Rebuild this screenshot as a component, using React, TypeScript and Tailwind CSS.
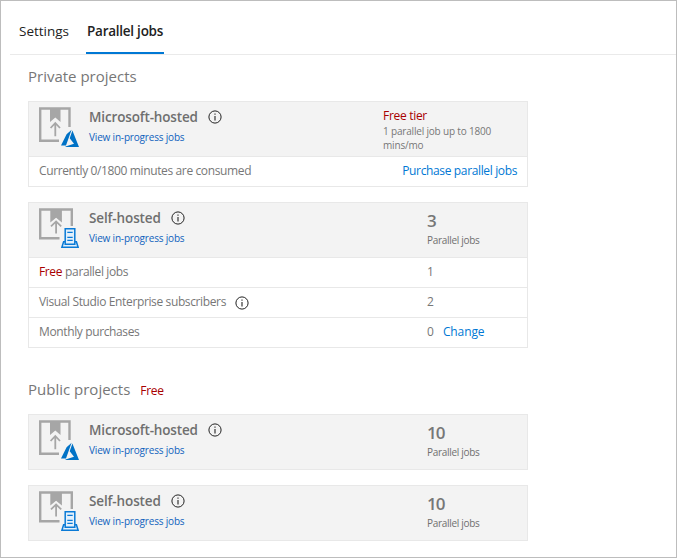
import type { ReactNode } from "react";

function InfoIcon() {
  return (
    <svg width="14" height="14" viewBox="0 0 14 14" fill="none" className="shrink-0">
      <circle cx="7" cy="7" r="6.1" stroke="#222222" strokeWidth="1" />
      <path d="M7 6v4.4" stroke="#222222" strokeWidth="1.1" />
      <path d="M7 3.4v1.3" stroke="#222222" strokeWidth="1.1" />
    </svg>
  );
}

function MicrosoftHostedIcon() {
  return (
    <svg width="40" height="41" viewBox="0 0 40 41" fill="none" className="shrink-0">
      <path d="M20 33.7H1.2V1.5H30.5V20" stroke="#a6a6a6" strokeWidth="2.4" />
      <path d="M11 1h10.5v14l-5.2-4.5L11 15z" fill="#a6a6a6" />
      <path d="M16.3 30V16M11.8 21l4.5-5 4.5 5" stroke="#f3f3f3" strokeWidth="4.5" />
      <path d="M16.3 29.3V16.3M11.6 21l4.7-5 4.7 5" stroke="#a6a6a6" strokeWidth="1.8" />
      <path d="M32.6 22.7L27.6 27.2 22 38.6h5zM33.4 23.6L30.7 31.2 35 36.8 26.5 39.4V40H40z" fill="#0072c6" />
    </svg>
  );
}

function SelfHostedIcon() {
  return (
    <svg width="40" height="41" viewBox="0 0 40 41" fill="none" className="shrink-0">
      <path d="M20.5 30.2H1.2V1.5H32.8V18" stroke="#a6a6a6" strokeWidth="2.4" />
      <path d="M11.3 1h11.6v13.5l-5.8-4.7-5.8 4.7z" fill="#a6a6a6" />
      <path d="M17.1 26V13M12 18.2l5.1-5 5.1 5" stroke="#f3f3f3" strokeWidth="4.2" />
      <path d="M17.1 25.5V13.6M12 18.4l5.1-5 5.1 5" stroke="#a6a6a6" strokeWidth="1.8" />
      <path d="M26 33.8h-1.4L22.9 39.2H39.1L37.4 33.8H36" fill="#e3f0fb" stroke="#0a7ad6" strokeWidth="1.5" />
      <path d="M26.2 36.3V20.7H35.8V36.3z" fill="#e3f0fb" stroke="#0a7ad6" strokeWidth="1.5" />
      <path d="M28.3 24.4h5.4M28.3 29.4h5.4M28.3 32.4h5.4" stroke="#0a7ad6" strokeWidth="1.2" />
    </svg>
  );
}

type HeaderProps = { kind: "microsoft" | "self"; children: ReactNode };

function CardHeader({ kind, children }: HeaderProps) {
  const microsoft = kind === "microsoft";
  return (
    <div className="flex h-[54px] bg-[#f3f3f3] pl-2.5">
      <div className="w-[50px] pt-[5px]">{microsoft ? <MicrosoftHostedIcon /> : <SelfHostedIcon />}</div>
      <div className="flex-1">
        <div className="flex items-center gap-[10px] pt-[5px]">
          <span className={`text-[13.5px] leading-5 font-semibold whitespace-nowrap text-[#6f6f6f] ${microsoft ? "w-[109px] tracking-[-0.15px]" : "w-[72px] tracking-[-0.12px]"}`}>
            {microsoft ? "Microsoft-hosted" : "Self-hosted"}
          </span>
          <InfoIcon />
        </div>
        <a className="block pt-[2px] text-[10px] leading-4 tracking-[-0.18px] text-[#1062bd]">View in-progress jobs</a>
      </div>
      {children}
    </div>
  );
}

function JobCount({ count }: { count: number }) {
  return (
    <div className="w-[100px] pt-[6px] text-[#6f6f6f]">
      <div className="text-[17px] leading-[23px] font-semibold tracking-[-1px] text-[#777777]">{count}</div>
      <div className="text-[10px] leading-4 tracking-[-0.3px]">Parallel jobs</div>
    </div>
  );
}

function Row({ label, children }: { label: ReactNode; children: ReactNode }) {
  return (
    <div className="flex h-[30px] border-t border-[#e8e8e8] pl-2.5 text-[12px] leading-[28px] text-[#777777]">
      <div className="flex flex-1 items-start tracking-[-0.37px]">{label}</div>
      {children}
    </div>
  );
}

function Card({ children, className = "" }: { children: ReactNode; className?: string }) {
  return <section className={`w-[500px] border border-[#e8e8e8] bg-white ${className}`}>{children}</section>;
}

export default function App() {
  return (
    <main className="h-[558px] w-[677px] overflow-hidden border border-[#bdbdbd] bg-white font-['Open_Sans','Noto_Sans',sans-serif]">
      <nav className="ml-[9px] flex h-[54px] items-end gap-[17px] border-b border-[#eaeaea] pl-[9px] text-[13.5px] text-[#222222]">
        <a className="w-[50px] pb-[13px] leading-5">Settings</a>
        <a className="h-[33px] w-[78px] border-b-2 border-[#0078d4] pl-px leading-[20px] font-semibold tracking-[-0.25px] whitespace-nowrap">Parallel jobs</a>
      </nav>
      <div className="pl-[27px]">
        <h2 className="h-[46px] pt-[9px] text-[15px] leading-6 text-[#777777]">Private projects</h2>
        <Card>
          <CardHeader kind="microsoft">
            <div className="w-[144px] pt-[5px]">
              <div className="text-[12px] leading-[18px] tracking-[-0.3px] text-[#a80000]">Free tier</div>
              <div className="-mt-px w-[120px] text-[10px] leading-[14px] tracking-[-0.18px] text-[#777777]">1 parallel job up to 1800 mins/mo</div>
            </div>
          </CardHeader>
          <Row label="Currently 0/1800 minutes are consumed">
            <a className="pr-[10px] tracking-[-0.36px] text-[#0078d4]">Purchase parallel jobs</a>
          </Row>
        </Card>
        <Card className="mt-[15px]">
          <CardHeader kind="self"><JobCount count={3} /></CardHeader>
          <Row label={<><span className="mr-[3px] text-[#a80000]">Free</span>parallel jobs</>}>
            <div className="w-[100px]">1</div>
          </Row>
          <Row label={<>Visual Studio Enterprise subscribers<span className="ml-[9px] pt-2"><InfoIcon /></span></>}>
            <div className="w-[100px]">2</div>
          </Row>
          <Row label="Monthly purchases">
            <div className="flex w-[100px] gap-[9px]">0<a className="tracking-[-0.1px] text-[#0078d4]">Change</a></div>
          </Row>
        </Card>
        <div className="flex h-[66px] gap-[10px] pt-[29px]">
          <h2 className="text-[15px] leading-6 text-[#777777]">Public projects</h2>
          <span className="text-[12px] leading-[27px] tracking-[-0.3px] text-[#a80000]">Free</span>
        </div>
        <Card><CardHeader kind="microsoft"><JobCount count={10} /></CardHeader></Card>
        <Card className="mt-[15px]"><CardHeader kind="self"><JobCount count={10} /></CardHeader></Card>
      </div>
    </main>
  );
}
